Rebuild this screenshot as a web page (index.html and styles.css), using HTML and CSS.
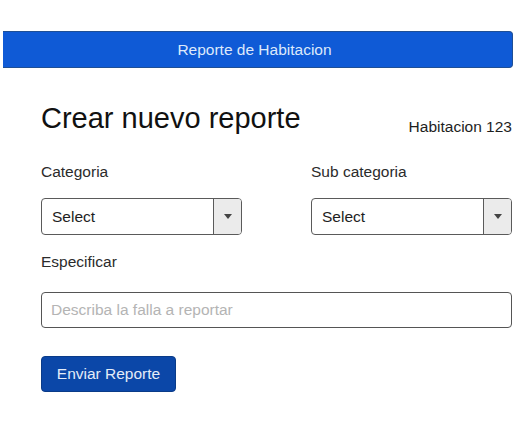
FILE: index.html
```html
<!DOCTYPE html>
<html lang="es">
<head>
<meta charset="utf-8">
<title>Reporte de Habitacion</title>
<link rel="stylesheet" href="styles.css">
</head>
<body>
  <div class="topbar">Reporte de Habitacion</div>
  <main class="content">
    <div class="title-row">
      <h1 class="title">Crear nuevo reporte</h1>
      <span class="room">Habitacion 123</span>
    </div>
    <div class="fields">
      <div class="field">
        <label class="label">Categoria</label>
        <div class="select">
          <span class="select-text">Select</span>
          <span class="select-arrow"><span class="tri"></span></span>
        </div>
      </div>
      <div class="field">
        <label class="label">Sub categoria</label>
        <div class="select">
          <span class="select-text">Select</span>
          <span class="select-arrow"><span class="tri"></span></span>
        </div>
      </div>
    </div>
    <label class="label label-spec">Especificar</label>
    <input class="text-input" type="text" placeholder="Describa la falla a reportar">
    <button class="btn" type="button">Enviar Reporte</button>
  </main>
</body>
</html>
```
FILE: styles.css
```css
* { box-sizing: border-box; }
html, body { margin: 0; padding: 0; background: #fff; }
body {
  font-family: "Liberation Sans", Arial, sans-serif;
  font-size: 15.5px;
  line-height: 18px;
  color: #2b2b2b;
  padding-top: 31px;
}
.topbar {
  margin: 0 12px 0 3px;
  height: 37px;
  background: #0f5ad6;
  border-top: 1px solid #1f4f95;
  border-bottom: 1px solid #1f4f95;
  border-right: 1px solid #1f4f95;
  border-radius: 0 4px 4px 0;
  color: #dde9fb;
  display: flex;
  align-items: center;
  justify-content: center;
  padding-right: 6px;
}
.content {
  padding: 0 13px 0 41px;
}
.title-row {
  display: flex;
  justify-content: space-between;
  align-items: flex-end;
  margin-top: 33px;
}
.title {
  margin: 0;
  font-size: 29px;
  line-height: 34px;
  font-weight: normal;
  color: #111;
}
.room {
  color: #1e1e1e;
  margin-bottom: -1px;
}
.fields {
  display: grid;
  grid-template-columns: 1fr 1fr;
  column-gap: 69px;
  margin-top: 28px;
}
.label {
  display: block;
  color: #2b2b2b;
}
.select {
  margin-top: 17px;
  height: 37px;
  border: 1px solid #5a5a5a;
  border-radius: 4px;
  display: flex;
  overflow: hidden;
}
.select-text {
  flex: 1;
  display: flex;
  align-items: center;
  padding-left: 10px;
  color: #1e1e1e;
}
.select-arrow {
  width: 28px;
  background: #ebebeb;
  border-left: 1px solid #5a5a5a;
  display: flex;
  align-items: center;
  justify-content: center;
}
.tri {
  width: 0;
  height: 0;
  border-left: 4px solid transparent;
  border-right: 4px solid transparent;
  border-top: 5px solid #444;
}
.label-spec {
  margin-top: 18px;
}
.text-input {
  display: block;
  width: 100%;
  margin-top: 21px;
  height: 36px;
  border: 1px solid #555;
  border-radius: 4px;
  padding: 0 9px;
  font-family: inherit;
  font-size: 15.5px;
  color: #222;
  background: #fff;
  outline: none;
}
.text-input::placeholder {
  color: #b4b4b4;
}
.btn {
  display: block;
  margin-top: 28px;
  width: 135px;
  height: 36px;
  background: #0b47a8;
  border: 1px solid #0a3b88;
  border-radius: 4px;
  color: #e4ecf8;
  font-family: inherit;
  font-size: 15.5px;
  padding: 0;
  cursor: pointer;
}
```
